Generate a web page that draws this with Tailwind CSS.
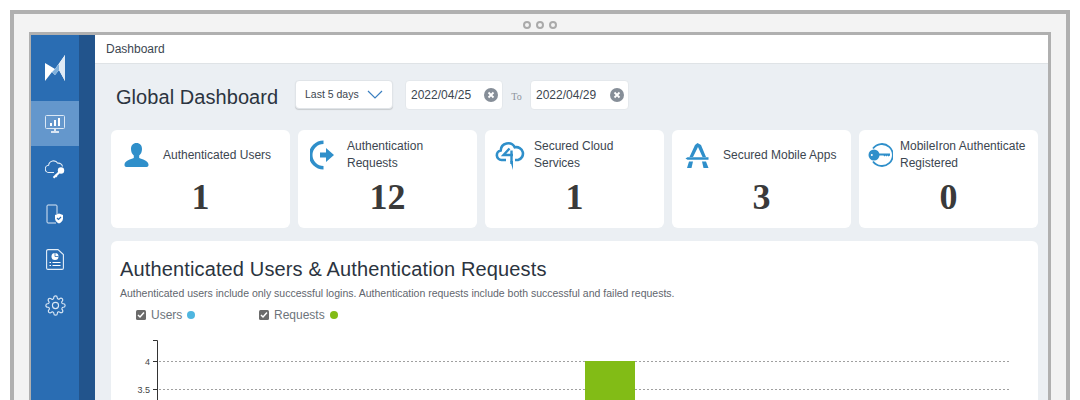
<!DOCTYPE html>
<html lang="en">
<head>
  <meta charset="UTF-8">
  <title>Global Dashboard</title>
  <script src="https://cdn.jsdelivr.net/npm/@tailwindcss/browser@4"></script>
</head>
<body class="bg-white h-[400px] overflow-hidden pt-[10px] px-[10px] font-['Liberation_Sans',Arial,sans-serif]">
  <!-- outer frame -->
  <div class="h-[390px] border-4 border-b-0 border-[#b0b0b0] bg-[#f3f3f3] px-[15px]">
    <div class="h-[18px] flex items-center justify-center gap-[5px] pt-[4px]">
      <span class="w-2 h-2 rounded-full border-2 border-[#aaaaaa]"></span>
      <span class="w-2 h-2 rounded-full border-2 border-[#aaaaaa]"></span>
      <span class="w-2 h-2 rounded-full border-2 border-[#aaaaaa]"></span>
    </div>

    <div class="h-[368px] border-t-[3px] border-l-2 border-r-[3px] border-[#b0b0b0] flex">
      <!-- sidebar -->
      <aside class="w-[48px] shrink-0 bg-[#2a6db3] flex flex-col items-center">
        <div class="h-[66px] w-full flex items-center justify-center">
          <svg width="20" height="26" viewBox="0 0 20 26">
            <path d="M0 8 L10 14 L20 0 V26 L14 15 L10 20 L7 17 L0 26 Z" fill="#ffffff"/>
            <path d="M7 17 L10 14 L14 9 L14 15 L10 20 Z" fill="#7fb0dc"/>
            <path d="M14 9 L20 0 V26 L14 15 Z" fill="#dfeaf5"/>
          </svg>
        </div>
        <div class="h-[45px] w-full bg-[#6497cc] flex items-center justify-center">
          <svg width="20" height="18" viewBox="0 0 20 18" fill="none" stroke="#dbe8f5" stroke-width="1">
            <rect x="0.5" y="0.5" width="19" height="13" rx="1"/>
            <path d="M6 11V8M10 11V5M14 11V3" stroke="#ffffff" stroke-width="2"/>
            <path d="M10 14v2M6 17h8" stroke="#ffffff" stroke-width="1.5"/>
          </svg>
        </div>
        <div class="h-[46px] w-full flex items-center justify-center">
          <svg width="20" height="19" viewBox="0 0 20 19" fill="none" stroke="#e4eef8" stroke-width="1.1">
            <path d="M9 12.500H4.200A3.600 3.600 0 0 1 3.600 5.300A5 5 0 0 1 12.800 3.200A4 4 0 0 1 17.500 6.500"/>
            <circle cx="16" cy="10.500" r="3.200" fill="#ffffff" stroke="none"/>
            <path d="M15 11.500L8.500 17.800M9.800 15l2 1.800M11.800 13.300l1.500 1.500" stroke="#ffffff" stroke-width="2"/>
          </svg>
        </div>
        <div class="h-[45px] w-full flex items-center justify-center">
          <svg width="18" height="21" viewBox="0 0 18 21" fill="none" stroke="#dbe8f5" stroke-width="1">
            <path d="M10 19H2a1 1 0 0 1-1-1V2a1 1 0 0 1 1-1h8a1 1 0 0 1 1 1v8"/>
            <path d="M13 9.500l4 1.500v3.500c0 2.500-2 4-4 5-2-1-4-2.500-4-5V11z" fill="#ffffff" stroke="none"/>
            <path d="M11 14l1.500 1.500 2.500-2.500" stroke="#2a6db3" stroke-width="1.200"/>
          </svg>
        </div>
        <div class="h-[45px] w-full flex items-center justify-center">
          <svg width="18" height="21" viewBox="0 0 18 21" fill="none" stroke="#e4eef8" stroke-width="1.1">
            <path d="M2 0.600H12L17.400 5.500V19a1.400 1.400 0 0 1-1.400 1.400H2A1.400 1.400 0 0 1 0.600 19V2A1.400 1.400 0 0 1 2 0.600Z"/>
            <circle cx="9" cy="7.500" r="3.500" fill="#ffffff" stroke="none"/>
            <path d="M9 7.500V4M9 7.500H12.500" stroke="#2a6db3" stroke-width="0.800"/>
            <path d="M3.500 13.500h1.500M6.500 13.500h8M3.500 16.500h1.500M6.500 16.500h8" stroke="#ffffff" stroke-width="1.200"/>
          </svg>
        </div>
        <div class="h-[46px] w-full flex items-center justify-center">
          <svg width="21" height="21" viewBox="0 0 24 24" fill="none" stroke="#dbe8f5" stroke-width="1.300" stroke-linejoin="round">
            <circle cx="12" cy="12" r="3.500"/>
            <path d="M19.400 15a1.650 1.650 0 0 0 .33 1.820l.06.06a2 2 0 1 1-2.830 2.830l-.06-.06a1.650 1.650 0 0 0-2.800 1.170V21a2 2 0 0 1-4 0v-.09A1.650 1.650 0 0 0 7.300 19.740l-.06.06a2 2 0 1 1-2.830-2.830l.06-.06A1.650 1.650 0 0 0 3.300 14H3a2 2 0 0 1 0-4h.09A1.650 1.650 0 0 0 4.260 7.200l-.06-.06a2 2 0 1 1 2.830-2.830l.06.06A1.650 1.650 0 0 0 10 3.200V3a2 2 0 0 1 4 0v.09a1.650 1.650 0 0 0 2.800 1.170l.06-.06a2 2 0 1 1 2.830 2.830l-.06.06A1.650 1.650 0 0 0 20.800 10H21a2 2 0 0 1 0 4h-.09a1.650 1.650 0 0 0-1.510 1z"/>
          </svg>
        </div>
      </aside>
      <div class="w-[16px] shrink-0 bg-[#22548c]"></div>

      <!-- main -->
      <main class="flex-1 min-w-0 bg-[#ebeff3]">
        <div class="h-[29px] bg-white border-b border-[#dfe3e6] pl-[11px] flex items-center text-[12px] text-[#3c4650]">Dashboard</div>

        <div class="pl-[16px] pr-[10px]">
          <!-- toolbar -->
          <div class="h-[66px] flex items-start pl-[5px] pt-[16px]">
            <h1 class="w-[179px] text-[20px] leading-[30px] tracking-[0.06px] text-[#2b3440] pt-[2px]">Global Dashboard</h1>
            <div class="w-[98px] h-[29px] bg-white rounded border border-[#e0e4e8] shadow-[0_1px_1px_rgba(0,0,0,0.15)] flex items-center justify-between pl-[9px] pr-[9px] text-[10.5px] text-[#3c4650]">
              <span>Last 5 days</span>
              <svg width="16" height="9" viewBox="0 0 16 9" fill="none" stroke="#3a7fc0" stroke-width="1.200"><path d="M1 1l7 7 7-7"/></svg>
            </div>
            <div class="ml-[12px] w-[98px] h-[30px] bg-white rounded border border-[#e4e8ec] flex items-center justify-between pl-[5px] pr-[4px] text-[12px] text-[#3c4650]">
              <span>2022/04/25</span>
              <svg width="14" height="14" viewBox="0 0 14 14"><circle cx="7" cy="7" r="7" fill="#868e98"/><path d="M4.500 4.500l5 5M9.500 4.500l-5 5" stroke="#fff" stroke-width="1.800"/></svg>
            </div>
            <span class="w-[27px] h-[30px] flex items-center justify-center text-[10px] text-[#8d949c] font-['Liberation_Serif',serif] pt-[2px]">To</span>
            <div class="w-[99px] h-[30px] bg-white rounded border border-[#e4e8ec] flex items-center justify-between pl-[5px] pr-[4px] text-[12px] text-[#3c4650]">
              <span>2022/04/29</span>
              <svg width="14" height="14" viewBox="0 0 14 14"><circle cx="7" cy="7" r="7" fill="#868e98"/><path d="M4.500 4.500l5 5M9.500 4.500l-5 5" stroke="#fff" stroke-width="1.800"/></svg>
            </div>
          </div>

          <!-- stat cards -->
          <div class="grid grid-cols-5 gap-[8px]">
            <div class="h-[98px] bg-white rounded-[6px]">
              <div class="h-[50px] flex items-center pl-[13px] gap-[14px] text-[12px] leading-[17px] text-[#3c4650]">
                <svg class="shrink-0" width="25" height="26" viewBox="0 0 25 26" fill="#2f8fca"><path d="M12.500 1c3.500 0 5.500 2.500 5.500 6 0 3-1.200 5.200-2.800 6.500v2.500c3 1.200 8.800 2.500 9.300 6.500.1 1.500-.5 2.500-2 2.500H2.500c-1.500 0-2.100-1-2-2.500.5-4 6.300-5.300 9.300-6.500v-2.500C8.200 12.200 7 10 7 7c0-3.500 2-6 5.500-6z"/></svg>
                <span>Authenticated Users</span>
              </div>
              <div class="text-center font-['Liberation_Serif',serif] font-bold text-[36px] leading-[34px] text-[#3a3a3a]">1</div>
            </div>

            <div class="h-[98px] bg-white rounded-[6px]">
              <div class="h-[50px] flex items-center pl-[12px] gap-[12px] text-[12px] leading-[17px] text-[#3c4650]">
                <svg class="shrink-0" width="25" height="30" viewBox="0 0 25 30"><path d="M14 2.200A12.800 12.800 0 0 0 14 27.800" transform="translate(-0.500 0)" fill="none" stroke="#2f8fca" stroke-width="3.600"/><path d="M10 12.500h6V8l8 7-8 7v-4.500h-6z" fill="#2f8fca"/></svg>
                <span>Authentication<br>Requests</span>
              </div>
              <div class="text-center font-['Liberation_Serif',serif] font-bold text-[36px] leading-[34px] text-[#3a3a3a]">12</div>
            </div>

            <div class="h-[98px] bg-white rounded-[6px]">
              <div class="h-[50px] flex items-center pl-[10px] gap-[9px] text-[12px] leading-[17px] text-[#3c4650]">
                <svg class="shrink-0" width="30" height="29" viewBox="0 0 30 29" fill="none" stroke="#2f8fca" stroke-width="2.600"><path d="M11 19H6.500a4.800 4.800 0 0 1-.8-9.500A7.500 7.500 0 0 1 19.800 6.300 6.300 6.300 0 0 1 23 19h-3"/><path d="M14.500 7.500L8.500 14H18" stroke-width="2.400"/><path d="M16.500 9.500V23" stroke-width="2.400"/><path d="M15.200 20h2.800v-1V29z" fill="#2f8fca" stroke="none"/></svg>
                <span>Secured Cloud<br>Services</span>
              </div>
              <div class="text-center font-['Liberation_Serif',serif] font-bold text-[36px] leading-[34px] text-[#3a3a3a]">1</div>
            </div>

            <div class="h-[98px] bg-white rounded-[6px]">
              <div class="h-[50px] flex items-center pl-[13px] gap-[13px] text-[12px] leading-[17px] text-[#3c4650]">
                <svg class="shrink-0" width="25" height="25" viewBox="0 0 25 25" fill="#2f8fca"><path d="M12.500 0L16 2 21 14h-3.500L13 4 8 14H4.500L10 2z"/><path d="M0.500 15.500L2.500 14.200h21v2.600h-21z"/><path d="M4 18.500h4L6.500 25H2zM17 18.500h4l2.500 6.500h-5z"/></svg>
                <span class="whitespace-nowrap">Secured Mobile Apps</span>
              </div>
              <div class="text-center font-['Liberation_Serif',serif] font-bold text-[36px] leading-[34px] text-[#3a3a3a]">3</div>
            </div>

            <div class="h-[98px] bg-white rounded-[6px]">
              <div class="h-[50px] flex items-center pl-[9px] gap-[7px] text-[12px] leading-[17px] text-[#3c4650]">
                <svg class="shrink-0" width="25" height="24" viewBox="0 0 25 24"><path d="M5 5.500A11 11 0 1 1 5 18.500" fill="none" stroke="#2f8fca" stroke-width="1.800"/><circle cx="6" cy="12" r="5.500" fill="#2f8fca"/><path d="M10 10.500h12v2l-1.500 1-1-1-1 1-1-1-1 1-1-1H10z" fill="#2f8fca"/><circle cx="3.800" cy="12" r="1" fill="#fff"/></svg>
                <span class="whitespace-nowrap">MobileIron Authenticate<br>Registered</span>
              </div>
              <div class="text-center font-['Liberation_Serif',serif] font-bold text-[36px] leading-[34px] text-[#3a3a3a]">0</div>
            </div>
          </div>

          <!-- chart card -->
          <section class="mt-[13px] h-[159px] overflow-hidden bg-white rounded-t-[6px] pl-[9px] pt-[16px]">
            <h2 class="text-[20px] leading-[24px] tracking-[0.14px] text-[#2b3440]">Authenticated Users &amp; Authentication Requests</h2>
            <p class="mt-[5px] text-[10.5px] leading-[14px] text-[#5f666e]">Authenticated users include only successful logins. Authentication requests include both successful and failed requests.</p>
            <div class="mt-[7px] h-[16px] flex items-center pl-[16px] text-[12px] text-[#6d747b]">
              <span class="w-[123px] flex items-center gap-[5px]">
                <svg width="10" height="10" viewBox="0 0 10 10"><rect width="10" height="10" rx="1.500" fill="#6b6b6b"/><path d="M2 5l2 2 4-4.500" fill="none" stroke="#fff" stroke-width="1.500"/></svg>
                Users
                <span class="w-2 h-2 rounded-full bg-[#4fb6e0]"></span>
              </span>
              <span class="flex items-center gap-[5px]">
                <svg width="10" height="10" viewBox="0 0 10 10"><rect width="10" height="10" rx="1.500" fill="#6b6b6b"/><path d="M2 5l2 2 4-4.500" fill="none" stroke="#fff" stroke-width="1.500"/></svg>
                Requests
                <span class="w-2 h-2 rounded-full bg-[#82bc16]"></span>
              </span>
            </div>
            <svg class="block mt-[17px]" width="918" height="60" viewBox="0 0 918 60">
              <path d="M33 0.500H37.500V60" fill="none" stroke="#333" stroke-width="1"/>
              <path d="M33 21.500H37M33 49.500H37" stroke="#333"/>
              <path d="M39 21.500H890M39 49.500H890" stroke="#a0a0a0" stroke-dasharray="2 2"/>
              <text x="30" y="24.500" text-anchor="end" font-size="9" fill="#444">4</text>
              <text x="30" y="52.500" text-anchor="end" font-size="9" fill="#444">3.5</text>
              <rect x="465" y="21" width="50" height="39" fill="#82bc16"/>
            </svg>
          </section>
        </div>
      </main>
    </div>
  </div>
</body>
</html>
